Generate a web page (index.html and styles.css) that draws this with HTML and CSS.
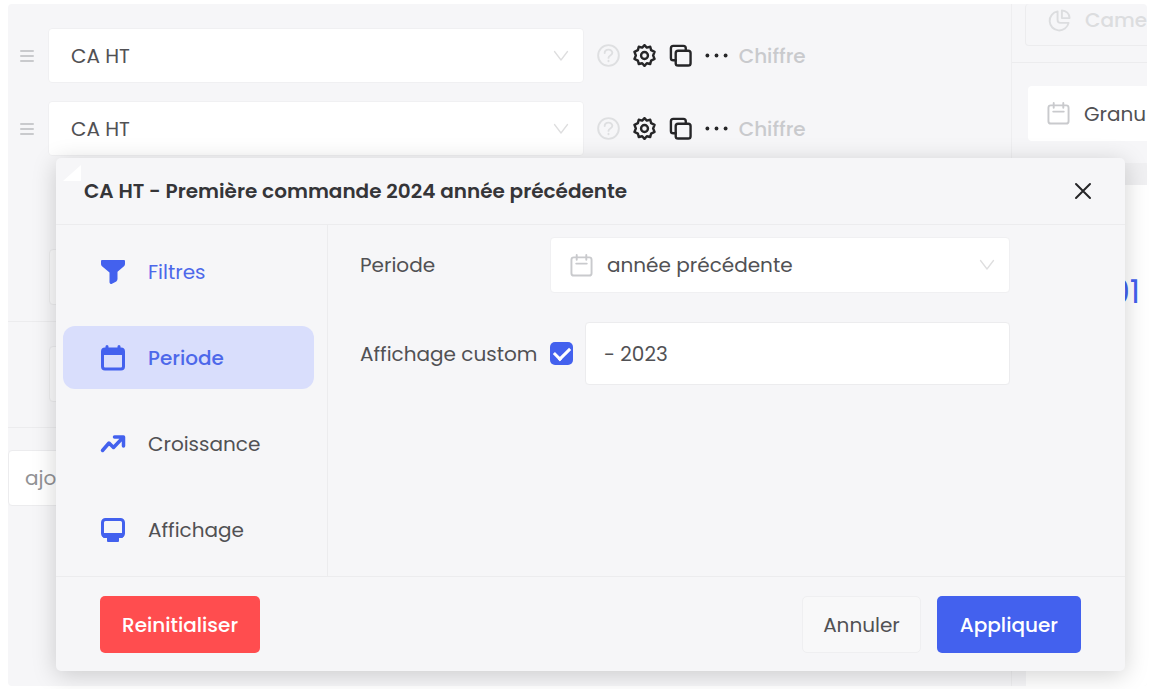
FILE: index.html
```html
<!DOCTYPE html>
<html lang="fr">
<head>
  <meta charset="UTF-8">
  <meta name="viewport" content="width=device-width, initial-scale=1.0">
  <title>CA HT</title>
  <link rel="stylesheet" href="styles.css">
</head>
<body>
  <!-- shared icons -->
  <svg class="sprite" aria-hidden="true">
    <symbol id="handle" viewBox="0 0 16 16"><path d="M2 3h12M2 8h12M2 13h12" stroke-width="2"/></symbol>
    <symbol id="chevron" viewBox="0 0 16 16"><path d="M1.500 3.500L8 12l6.500-8.500" stroke-width="1.300"/></symbol>
    <symbol id="help" viewBox="0 0 24 24"><circle cx="12" cy="12" r="10.800"/><path d="M8 9.500c0-4.800 8-4.800 8-.3 0 3-4 2.500-4 5.300M12 17.500v.5"/></symbol>
    <symbol id="gear" viewBox="0 0 24 24"><path d="M12 1.200l2.400 2.500 3.600-.8.900 3.500 3.600 1.800-1.500 3.800 1.500 3.500-3.600 1.800-.9 3.600-3.600-.8L12 22.800l-2.400-2.700-3.600.8-.9-3.600-3.600-1.800L3 12 1.500 8.200l3.600-1.800.9-3.500 3.600.8z"/><circle cx="12" cy="12" r="3.600"/></symbol>
    <symbol id="copy" viewBox="0 0 24 24"><rect x="7" y="7" width="15.500" height="15.500" rx="2.500"/><path d="M7 17H4.500A2.500 2.500 0 0 1 2 14.500V4.500A2.500 2.500 0 0 1 4.500 2h10.500A2.500 2.500 0 0 1 17.500 4.500V7"/></symbol>
    <symbol id="dots" viewBox="0 0 24 24"><g fill="currentColor" stroke="none"><circle cx="2.500" cy="12" r="2"/><circle cx="12" cy="12" r="2"/><circle cx="21.500" cy="12" r="2"/></g></symbol>
    <symbol id="calendar" viewBox="0 0 24 24"><rect x="1.500" y="3.500" width="21" height="19" rx="2.500"/><path d="M7 1v5M17 1v5M6.500 10h11"/></symbol>
  </svg>

  <div class="app">
    <main class="panel">
      <section class="group">
        <div class="metric">
          <svg class="icon-sm muted"><use href="#handle"/></svg>
          <div class="field metric-field">
            <select aria-label="Indicateur"><option>CA HT</option></select>
            <svg class="icon-sm chevron"><use href="#chevron"/></svg>
          </div>
          <div class="tools">
            <svg class="icon help"><use href="#help"/></svg>
            <button class="tool" aria-label="Configurer"><svg class="icon"><use href="#gear"/></svg></button>
            <button class="tool" aria-label="Dupliquer"><svg class="icon"><use href="#copy"/></svg></button>
            <button class="tool" aria-label="Plus"><svg class="icon"><use href="#dots"/></svg></button>
          </div>
          <span class="kind">Chiffre</span>
        </div>
        <div class="metric">
          <svg class="icon-sm muted"><use href="#handle"/></svg>
          <div class="field metric-field">
            <select aria-label="Indicateur"><option>CA HT</option></select>
            <svg class="icon-sm chevron"><use href="#chevron"/></svg>
          </div>
          <div class="tools">
            <svg class="icon help"><use href="#help"/></svg>
            <button class="tool" aria-label="Configurer"><svg class="icon"><use href="#gear"/></svg></button>
            <button class="tool" aria-label="Dupliquer"><svg class="icon"><use href="#copy"/></svg></button>
            <button class="tool" aria-label="Plus"><svg class="icon"><use href="#dots"/></svg></button>
          </div>
          <span class="kind">Chiffre</span>
        </div>
        <div class="slot slot-last"></div>
      </section>
      <section class="group">
        <div class="slot"></div>
      </section>
      <input class="add" type="text" aria-label="ajouter" placeholder="ajouter">
    </main>

    <aside class="side">
      <div class="side-top">
        <button class="chart-type">
          <svg class="icon" viewBox="0 0 24 24"><path d="M10 2.500a10 10 0 1 0 11.500 12H13a3 3 0 0 1-3-3z"/><path d="M14.500 1.500v8h8a8 8 0 0 0-8-8z"/></svg>
          Came
        </button>
      </div>
      <div class="side-filter">
        <button class="granularity">
          <svg class="icon muted"><use href="#calendar"/></svg>
          Granu
        </button>
      </div>
      <div class="preview">01</div>
    </aside>
  </div>

  <div class="modal" role="dialog" aria-labelledby="modal-title">
    <span class="modal-arrow"></span>
    <header class="modal-header">
      <h1 id="modal-title">CA HT - Première commande 2024 année précédente</h1>
      <button class="close" aria-label="Fermer">
        <svg viewBox="0 0 18 18"><path d="M2 2l14 14M16 2L2 16"/></svg>
      </button>
    </header>
    <div class="modal-body">
      <nav class="tabs">
        <button class="tab tab-blue">
          <svg viewBox="0 0 26 26"><path d="M2 1h22a1 1 0 0 1 1 1v3a3 3 0 0 1-1 2.200l-6.500 5.600V20a3 3 0 0 1-1.200 2.400L12 24.800a1.700 1.700 0 0 1-2.500-1.500V13.500L2 7.200A3 3 0 0 1 1 5V2a1 1 0 0 1 1-1z" fill="currentColor" stroke="none"/></svg>
          Filtres
        </button>
        <button class="tab tab-blue tab-active">
          <svg viewBox="0 0 26 26"><rect x="2.500" y="4" width="21" height="20" rx="2.500"/><path d="M2 4h22v6H2z" fill="currentColor" stroke="none"/><path d="M7 1.500v3M19 1.500v3"/></svg>
          Periode
        </button>
        <button class="tab">
          <svg viewBox="0 0 26 26"><path d="M2.500 19.500l6.500-7.500 4.500 4.500 9.500-10M14.500 6h9v9" stroke-width="3.500"/></svg>
          Croissance
        </button>
        <button class="tab">
          <svg viewBox="0 0 26 26"><rect x="2.500" y="2.500" width="21" height="17" rx="3"/><path d="M2.500 16h21v2.500a2.500 2.500 0 0 1-2.500 2.500h-2v3a1 1 0 0 1-1 1H8a1 1 0 0 1-1-1v-3H5a2.500 2.500 0 0 1-2.500-2.500z" fill="currentColor" stroke="none"/></svg>
          Affichage
        </button>
      </nav>
      <div class="settings">
        <div class="setting">
          <label class="setting-label" for="period">Periode</label>
          <div class="field period-field">
            <svg class="icon muted"><use href="#calendar"/></svg>
            <select id="period"><option>année précédente</option></select>
            <svg class="icon-sm chevron"><use href="#chevron"/></svg>
          </div>
        </div>
        <div class="setting">
          <label class="setting-label" for="custom">Affichage custom</label>
          <input class="check" type="checkbox" id="custom" checked>
          <input class="custom-text" type="text" aria-label="Texte custom" value="- 2023">
        </div>
      </div>
    </div>
    <footer class="modal-footer">
      <button class="btn btn-danger">Reinitialiser</button>
      <div class="actions">
        <button class="btn btn-plain">Annuler</button>
        <button class="btn btn-primary">Appliquer</button>
      </div>
    </footer>
  </div>
</body>
</html>
```
FILE: styles.css
```css
* {
  box-sizing: border-box;
}
body {
  margin: 0;
  min-height: 100vh;
  display: flex;
  padding: 4px 3px 3px 8px;
  background: #fff;
  color: #515154;
  font-family: Poppins, Inter, sans-serif;
  font-size: 20px;
  line-height: 28px;
}
button, input, select {
  font: inherit;
  color: inherit;
}
button {
  border: none;
  background: none;
  padding: 0;
  cursor: pointer;
}
svg {
  display: block;
  flex: none;
  fill: none;
  stroke: currentColor;
  stroke-width: 2;
  stroke-linecap: round;
  stroke-linejoin: round;
}
.sprite {
  position: absolute;
  width: 0;
  height: 0;
}
.icon {
  width: 23px;
  height: 23px;
}
.icon-sm {
  width: 16px;
  height: 16px;
}
.muted {
  color: #c9cacd;
}
.chevron {
  color: #dededf;
}

/* page */
.app {
  flex: 1;
  display: flex;
  overflow: hidden;
  background: #f6f6f8;
  border-radius: 4px;
}
.panel {
  flex: 1;
  border-right: 1px solid #eeeef0;
}
.group {
  padding: 24px 0 16px 11px;
  border-bottom: 1px solid #ececee;
}
.group + .group {
  padding-bottom: 25px;
}
.metric {
  display: flex;
  align-items: center;
  margin-bottom: 18px;
}
.field {
  display: flex;
  align-items: center;
  height: 56px;
  padding: 0 14px 0 22px;
  background: #fff;
  border: 1px solid #f0f0f2;
  border-radius: 4px;
}
.field select {
  flex: 1;
  min-width: 0;
  padding: 0;
  border: none;
  background: none;
  appearance: none;
  outline: none;
}
.metric-field {
  width: 54%;
  height: 55px;
  margin: 0 13px;
}
.tools {
  display: flex;
  gap: 13px;
  color: #262628;
}
.tool {
  stroke-width: 2;
}
.tool svg {
  stroke-width: 2.5;
}
.help {
  color: #dedfe1;
}
.kind {
  margin-left: 11px;
  color: #c9cacd;
  font-weight: 500;
}
.slot {
  height: 56px;
  margin-left: 30px;
  width: 54%;
  border: 1px solid #ececee;
  border-radius: 4px;
  background: #fafafb;
}
.slot-last {
  margin-top: 93px;
}
.add {
  display: block;
  width: 240px;
  height: 56px;
  margin-top: 22px;
  padding: 0 16px;
  border: 1px solid #ececee;
  border-radius: 4px;
  background: #fff;
}
.add::placeholder {
  color: #929295;
  opacity: 1;
}

.side {
  width: 135px;
  display: flex;
  flex-direction: column;
}
.side-top {
  padding: 0 0 16px 13px;
  border-bottom: 1px solid #ececee;
}
.chart-type, .granularity {
  display: flex;
  align-items: center;
  gap: 14px;
  width: 240px;
  padding-left: 22px;
  border-radius: 4px;
}
.chart-type {
  height: 42px;
  padding-bottom: 9px;
  border: 1px solid #ececee;
  border-top: none;
  color: #dcdddf;
  font-weight: 500;
}
.side-filter {
  padding: 23px 0 22px 16px;
}
.granularity {
  height: 55px;
  padding-left: 19px;
  background: #fff;
}
.preview {
  flex: 1;
  margin-left: 14px;
  padding: 89px 7px 0 0;
  background: #fff;
  border-top: 22px solid #f0f0f2;
  color: #4361ee;
  font-size: 32px;
  line-height: 36px;
  text-align: right;
}

/* modal */
.modal {
  position: absolute;
  top: 158px;
  left: 56px;
  right: 25px;
  background: #f6f6f8;
  border-radius: 5px;
  box-shadow: 0 4px 24px rgba(0, 0, 0, 0.18);
}
.modal-arrow {
  position: absolute;
  top: 7px;
  left: 7px;
  border-left: 18px solid transparent;
  border-bottom: 16px solid #fff;
}
.modal-header {
  display: flex;
  align-items: center;
  justify-content: space-between;
  height: 67px;
  padding: 0 33px 0 28px;
  border-bottom: 1px solid #ececee;
}
.modal-header h1 {
  margin: 0;
  color: #353538;
  font-size: 20px;
  font-weight: 600;
}
.close {
  color: #262628;
}
.close svg {
  width: 18px;
  height: 18px;
}
.modal-body {
  display: flex;
}
.tabs {
  display: flex;
  flex-direction: column;
  gap: 23px;
  width: 272px;
  padding: 15px 13px 15px 7px;
  border-right: 1px solid #ececee;
}
.tab {
  display: flex;
  align-items: center;
  gap: 22px;
  height: 63px;
  padding: 0 37px;
  border-radius: 12px;
}
.tab svg {
  width: 26px;
  height: 26px;
  color: #4361ee;
  stroke-width: 3;
}
.tab-blue {
  color: #4d68ea;
}
.tab-active {
  background: #d9defc;
  font-weight: 500;
}
.settings {
  flex: 1;
  display: flex;
  flex-direction: column;
  gap: 29px;
  padding: 12px 115px 0 32px;
}
.setting {
  display: flex;
  align-items: center;
}
.setting-label {
  width: 190px;
}
.period-field {
  flex: 1;
  gap: 14px;
  padding-left: 19px;
}
.check {
  flex: none;
  width: 23px;
  height: 23px;
  margin: 0 12px 0 0;
  appearance: none;
  border-radius: 5px;
  background: #4361ee;
  display: grid;
  place-items: center;
}
.check:checked::after {
  content: "";
  width: 13px;
  height: 7px;
  margin-bottom: 4px;
  border-left: 3px solid #fff;
  border-bottom: 3px solid #fff;
  transform: rotate(-45deg);
}
.custom-text {
  flex: 1;
  min-width: 0;
  height: 63px;
  padding: 0 18px;
  border: 1px solid #ececee;
  border-radius: 4px;
  background: #fff;
}
.modal-footer {
  display: flex;
  justify-content: space-between;
  padding: 19px 44px 18px;
  border-top: 1px solid #ececee;
}
.actions {
  display: flex;
  gap: 16px;
}
.btn {
  height: 57px;
  padding: 0 22px;
  border-radius: 5px;
}
.btn-danger {
  background: #ff4d4f;
  color: #fff;
  font-weight: 500;
}
.btn-plain {
  padding: 0 20px;
  border: 1px solid #efeff1;
  background: #f8f8f9;
}
.btn-primary {
  padding: 0 23px;
  background: #4361ee;
  color: #fff;
  font-weight: 500;
}
```
